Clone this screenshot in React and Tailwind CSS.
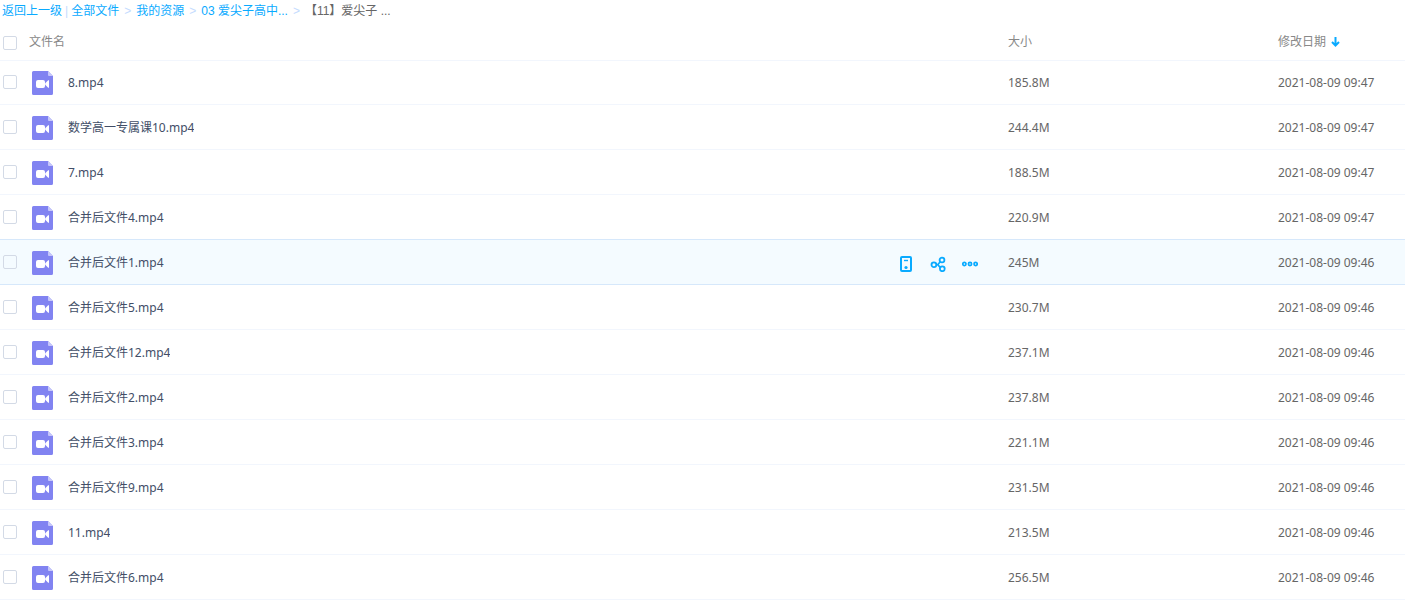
import React, { useState } from 'react';

const files = [
  { name: '8.mp4', size: '185.8M', date: '2021-08-09 09:47' },
  { name: '数学高一专属课10.mp4', size: '244.4M', date: '2021-08-09 09:47' },
  { name: '7.mp4', size: '188.5M', date: '2021-08-09 09:47' },
  { name: '合并后文件4.mp4', size: '220.9M', date: '2021-08-09 09:47' },
  { name: '合并后文件1.mp4', size: '245M', date: '2021-08-09 09:46' },
  { name: '合并后文件5.mp4', size: '230.7M', date: '2021-08-09 09:46' },
  { name: '合并后文件12.mp4', size: '237.1M', date: '2021-08-09 09:46' },
  { name: '合并后文件2.mp4', size: '237.8M', date: '2021-08-09 09:46' },
  { name: '合并后文件3.mp4', size: '221.1M', date: '2021-08-09 09:46' },
  { name: '合并后文件9.mp4', size: '231.5M', date: '2021-08-09 09:46' },
  { name: '11.mp4', size: '213.5M', date: '2021-08-09 09:46' },
  { name: '合并后文件6.mp4', size: '256.5M', date: '2021-08-09 09:46' },
];

const ancestors = ['全部文件', '我的资源', '03 爱尖子高中...'];

function VideoIcon() {
  return (
    <svg className="h-6 w-[21px] shrink-0" viewBox="0 0 21 24" aria-hidden="true">
      <path d="M1.5 0H16l5 5v17.5a1.5 1.5 0 0 1-1.5 1.5h-18A1.5 1.5 0 0 1 0 22.5v-21A1.5 1.5 0 0 1 1.5 0Z" fill="#8183f1" />
      <path d="M16 0l5 5h-4a1 1 0 0 1-1-1Z" fill="#c6c7fa" />
      <rect x="4" y="9" width="9" height="8" rx="2" fill="#fff" />
      <path d="M13.2 12.3 16.2 9.2h.8v7.6h-.8l-3-3.1Z" fill="#fff" />
    </svg>
  );
}

function DeviceIcon() {
  return (
    <svg className="h-4 w-4" viewBox="0 0 16 16" fill="none" stroke="#09aaff" aria-hidden="true">
      <rect x="3" y="1" width="10" height="14" rx="1" strokeWidth="2" />
      <path d="M6 4.5h4" strokeWidth="1.4" />
      <circle cx="8" cy="11.5" r="1.6" fill="#09aaff" stroke="none" />
    </svg>
  );
}

function ShareIcon() {
  return (
    <svg className="h-4 w-4" viewBox="0 0 16 16" fill="none" stroke="#09aaff" strokeWidth="1.8" aria-hidden="true">
      <circle cx="3.9" cy="8.7" r="2.4" />
      <circle cx="12" cy="4" r="2.4" />
      <circle cx="12.3" cy="12.8" r="2.4" />
      <path d="M6.2 8.7h1.6l2.4-2.9M7.8 8.7l2.4 2.7" strokeWidth="1.7" />
    </svg>
  );
}

function MoreIcon() {
  return (
    <svg className="h-4 w-4" viewBox="0 0 16 16" fill="none" stroke="#09aaff" strokeWidth="1.7" aria-hidden="true">
      <circle cx="2.4" cy="8" r="1.6" />
      <circle cx="8" cy="8" r="1.6" />
      <circle cx="13.6" cy="8" r="1.6" />
    </svg>
  );
}

function Check({ label, checked, onChange }) {
  return (
    <input
      type="checkbox"
      aria-label={label}
      checked={checked}
      onChange={onChange}
      className="block h-[14px] w-[14px] shrink-0 appearance-none rounded-[2px] border border-[#d3dae6] checked:bg-[#09aaff]"
    />
  );
}

export default function App() {
  const [selected, setSelected] = useState([]);
  const active = 4;

  const toggle = (name) =>
    setSelected((s) => (s.includes(name) ? s.filter((n) => n !== name) : [...s, name]));
  const all = selected.length === files.length;

  return (
    <main className="bg-white font-['Noto_Sans','Noto_Sans_CJK_SC',sans-serif] text-xs text-[#666]">
      <nav aria-label="路径" className="flex h-[22px] items-center pl-0.5 font-['Liberation_Sans','Noto_Sans_CJK_SC',sans-serif] leading-4 whitespace-nowrap">
        <a href="#up" className="text-[#09aaff]">返回上一级</a>
        <span className="px-[3px] text-[#c4dbfe]">|</span>
        {ancestors.map((item) => (
          <React.Fragment key={item}>
            <a href="#folder" className="text-[#09aaff]">{item}</a>
            <span className="px-[5px] text-[#c4dbfe]">&gt;</span>
          </React.Fragment>
        ))}
        <span>【11】爱尖子 ...</span>
      </nav>

      <table className="w-full table-fixed border-separate border-spacing-0 text-left">
        <thead>
          <tr className="h-[39px] text-[#888] [&>th]:border-b [&>th]:border-[#f2f6fd] [&>th]:px-0 [&>th]:pt-0.5 [&>th]:pb-0 [&>th]:font-normal">
            <th>
              <div className="flex items-center gap-3 pl-[3px]">
                <div className="pt-0.5">
                  <Check
                    label="全选"
                    checked={all}
                    onChange={() => setSelected(all ? [] : files.map((f) => f.name))}
                  />
                </div>
                <span>文件名</span>
              </div>
            </th>
            <th className="w-[270px]">大小</th>
            <th className="w-[127px]">
              <button type="button" className="flex items-center gap-[5px]">
                修改日期
                <svg className="h-[10px] w-[9px]" viewBox="0 0 9 10" fill="none" stroke="#09aaff" strokeWidth="2" aria-hidden="true">
                  <path d="M4.5 0v9M1 5l3.5 3.5L8 5" />
                </svg>
              </button>
            </th>
          </tr>
        </thead>
        <tbody>
          {files.map((file, i) => {
            const edge =
              i === active || i === active - 1 ? '[&>td]:border-[#d6e8fb]' : '[&>td]:border-[#f2f6fd]';
            const height = i === 0 ? 'h-11 [&>td]:pt-0' : 'h-[45px] [&>td]:pt-0.5';
            return (
              <tr
                key={file.name}
                className={`${height} ${edge} ${i === active ? 'bg-[#f4fbff]' : ''} [&>td]:border-b [&>td]:px-0 [&>td]:pb-0`}
              >
                <td>
                  <div className="flex items-center pl-[3px]">
                    <div className="pb-0.5">
                      <Check
                        label={`选择 ${file.name}`}
                        checked={selected.includes(file.name)}
                        onChange={() => toggle(file.name)}
                      />
                    </div>
                    <div className="flex min-w-0 flex-1 items-center gap-[15px] pl-[15px]">
                      <VideoIcon />
                      <a href="#file" className="truncate text-[#424e67]">{file.name}</a>
                    </div>
                    {i === active && (
                      <div className="flex gap-4 pt-0.5 pr-[30px]">
                        <button type="button" aria-label="下载到设备"><DeviceIcon /></button>
                        <button type="button" aria-label="分享"><ShareIcon /></button>
                        <button type="button" aria-label="更多"><MoreIcon /></button>
                      </div>
                    )}
                  </div>
                </td>
                <td>{file.size}</td>
                <td className="whitespace-nowrap">{file.date}</td>
              </tr>
            );
          })}
        </tbody>
      </table>
    </main>
  );
}
